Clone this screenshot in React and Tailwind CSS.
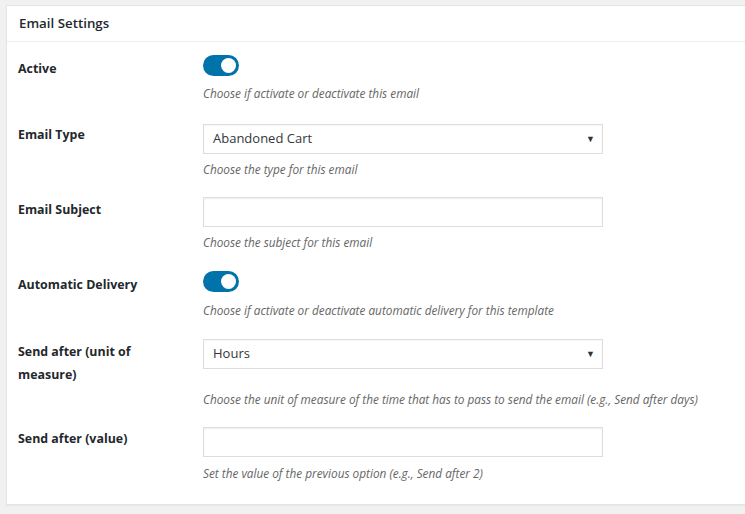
import React from "react";

const Toggle = () => (
  <div className="flex h-[21px] w-[36px] items-center justify-end rounded-full bg-[#0073aa] px-[3px]">
    <div className="h-[15px] w-[15px] rounded-full bg-white" />
  </div>
);

const Select = ({ value }) => (
  <div className="flex h-[30px] w-[400px] items-center justify-between border border-[#dddddd] bg-white pl-[9px] pr-[7px] text-[13px] text-[#32373c] shadow-[inset_0_1px_2px_rgba(0,0,0,0.04)]">
    <span>{value}</span>
    <span className="text-[9px] text-[#333]">▼</span>
  </div>
);

const Input = () => (
  <div className="h-[30px] w-[400px] border border-[#dddddd] bg-white shadow-[inset_0_1px_2px_rgba(0,0,0,0.07)]" />
);

const Desc = ({ children, className = "" }) => (
  <p className={`text-[11.8px] italic text-[#666] ${className}`}>{children}</p>
);

const Row = ({ label, children, className = "", labelClass = "" }) => (
  <div className={`flex ${className}`}>
    <div
      className={`w-[196px] shrink-0 pl-[11px] pr-[40px] text-[12.4px] font-bold leading-[23px] text-[#23282d] ${labelClass}`}
    >
      {label}
    </div>
    <div className="flex flex-col">{children}</div>
  </div>
);

export default function App() {
  return (
    <div
      className="h-[514px] w-[745px] overflow-hidden bg-[#f1f1f1] pt-[5px] pl-[6px]"
      style={{ fontFamily: '"Open Sans", "Noto Sans", sans-serif' }}
    >
      <div className="h-[500px] w-[760px] border border-[#e5e5e5] bg-white shadow-[0_1px_1px_rgba(0,0,0,0.04)]">
        <div className="flex h-[36px] items-center border-b border-[#eeeeee] px-[12px] text-[13.3px] font-semibold text-[#23282d]">
          Email Settings
        </div>
        <div className="flex flex-col pt-[12px]">
          <Row label="Active" labelClass="mt-[3px]">
            <div className="mt-[1px]">
              <Toggle />
            </div>
            <Desc className="mt-[9px]">Choose if activate or deactivate this email</Desc>
          </Row>
          <Row label="Email Type" className="mt-[21px]" labelClass="-mt-[1px]">
            <Select value="Abandoned Cart" />
            <Desc className="mt-[7px]">Choose the type for this email</Desc>
          </Row>
          <Row label="Email Subject" className="mt-[19px]" labelClass="mt-[1px]">
            <Input />
            <Desc className="mt-[7px]">Choose the subject for this email</Desc>
          </Row>
          <Row label="Automatic Delivery" className="mt-[18px]" labelClass="mt-[3px]">
            <div className="mt-[1px]">
              <Toggle />
            </div>
            <Desc className="mt-[10px]">Choose if activate or deactivate automatic delivery for this template</Desc>
          </Row>
          <Row label="Send after (unit of measure)" className="mt-[19px]" labelClass="mt-[1px]">
            <Select value="Hours" />
            <Desc className="mt-[22px]">
              Choose the unit of measure of the time that has to pass to send the email (e.g., Send after days)
            </Desc>
          </Row>
          <Row label="Send after (value)" className="mt-[19px]" labelClass="mt-[0px]">
            <Input />
            <Desc className="mt-[8px]">Set the value of the previous option (e.g., Send after 2)</Desc>
          </Row>
        </div>
      </div>
    </div>
  );
}
